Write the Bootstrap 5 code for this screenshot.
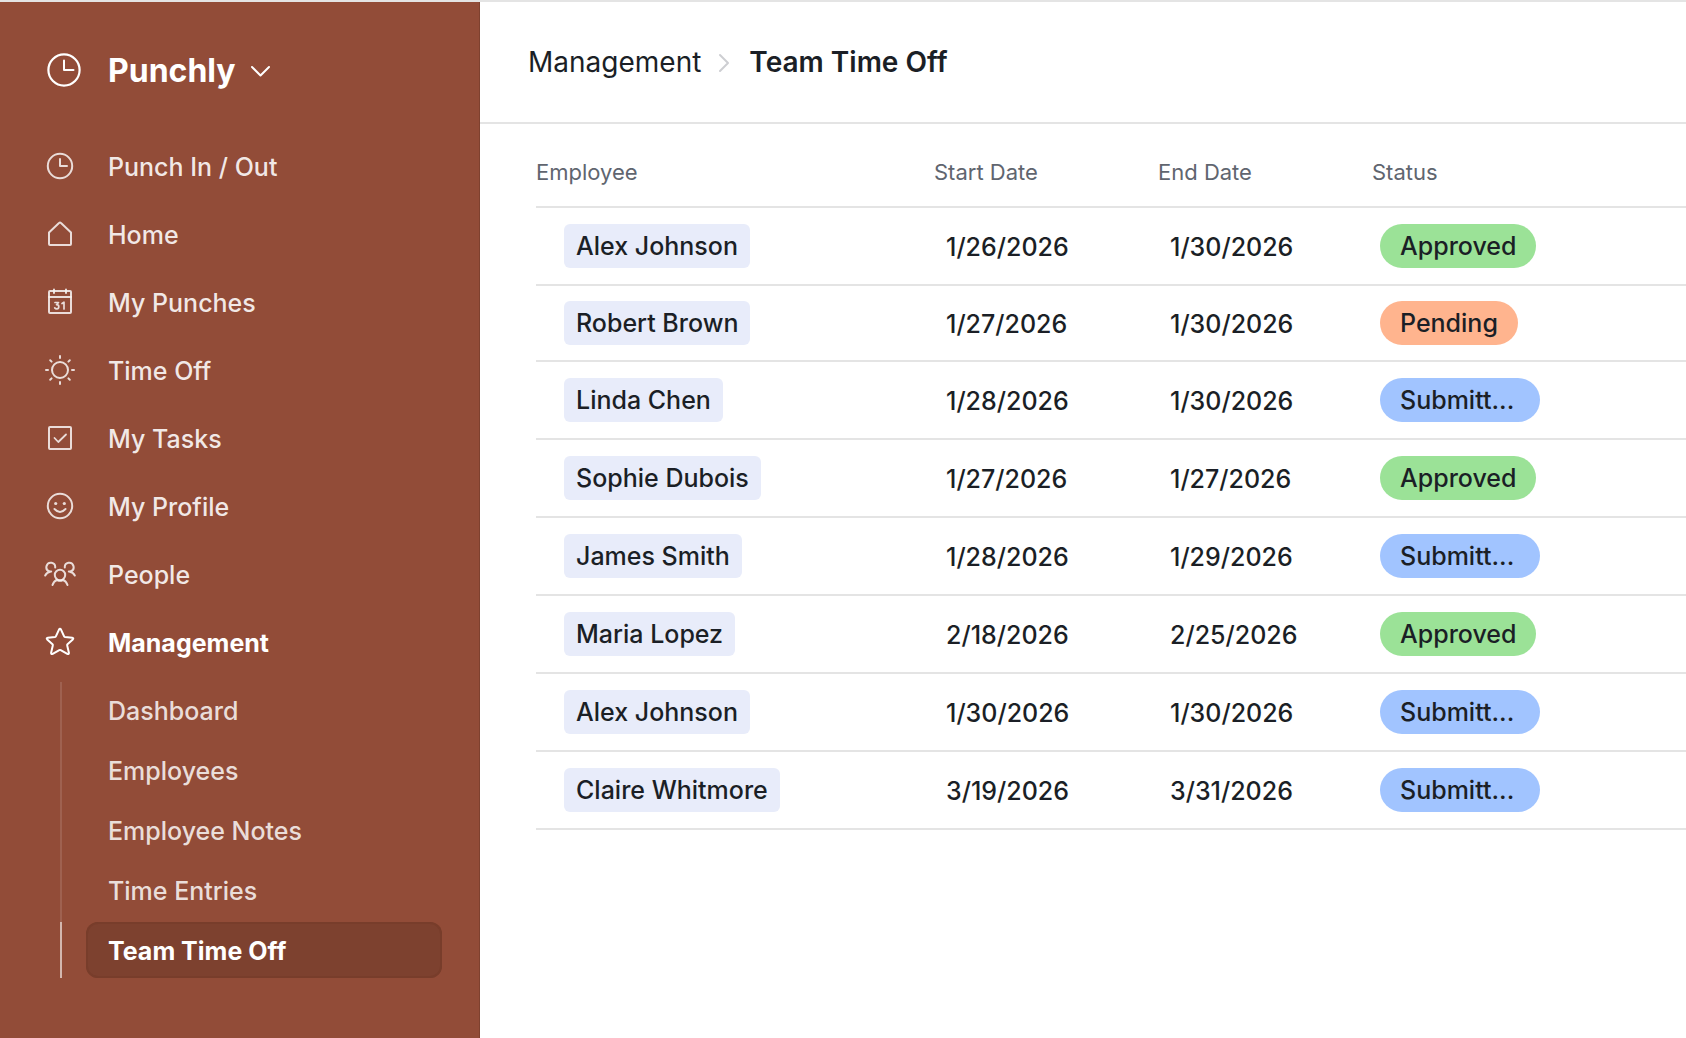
<!DOCTYPE html>
<html lang="en">
<head>
<meta charset="utf-8">
<meta name="viewport" content="width=device-width, initial-scale=1">
<title>Punchly – Team Time Off</title>
<link href="https://cdn.jsdelivr.net/npm/bootstrap@5.3.0/dist/css/bootstrap.min.css" rel="stylesheet">
<style>
  body { font-family: Inter, "Liberation Sans", sans-serif; font-size: 25px; font-weight: 450; line-height: 32px; color: #1b1f26; background: #fff; }
  .app-shell { border-top: 2px solid #e4e4e4; }
  .app-sidebar { width: 480px; background: #924c38; border-right: 1px solid #7e412f; padding: 36px 37px 0 40px; }
  .brand-btn { height: 64px; color: #fff; font-size: 32px; line-height: 40px; padding: 2px 0 0 4px; margin-bottom: 32px; }
  .brand-btn svg:first-child { margin: 0 24px 2px 0; }
  .brand-btn svg:last-child { margin-left: 12px; }
  .side-link { height: 64px; color: rgba(255,255,255,.88); gap: 28px; margin-bottom: 4px; padding-top: 2px; }
  .side-link:hover, .sub-link:hover { color: #fff; }
  .side-link.current { color: #fff; font-weight: 700; }
  svg { fill: none; stroke: currentColor; stroke-linecap: round; stroke-linejoin: round; flex: none; display: block; }
  .side-link svg { opacity: .92; margin-bottom: 2px; }
  .side-link.current svg { opacity: 1; }
  .sub-list { margin: 8px 0 0 20px; }
  .sub-list li { border-left: 2px solid rgba(255,255,255,.12); padding: 0 0 4px 24px; }
  .sub-list li.on { border-color: rgba(255,255,255,.6); padding-bottom: 0; }
  .sub-link { height: 56px; padding: 2px 22px 0; border-radius: 12px; color: rgba(255,255,255,.83); }
  .sub-link.active { background: #7d412f; color: #fff; font-weight: 650; box-shadow: inset 0 0 0 2px #783d2b; }
  .page-head { height: 122px; border-bottom: 2px solid #e4e4e4; padding: 0 48px; font-size: 28px; font-weight: 400; }
  .crumbs { gap: 16px; }
  .crumbs a { color: #1b1f26; }
  .crumbs svg { color: #cdced2; margin-top: 2px; }
  .grid-table { table-layout: fixed; border-collapse: separate; border-spacing: 0; margin: 0; color: inherit; }
  .grid-table th, .grid-table td { border-bottom: 2px solid #e4e4e4; padding: 0; height: 78px; white-space: nowrap; vertical-align: middle; }
  .grid-table th { height: 84px; padding-top: 14px; font-size: 22px; font-weight: 400; color: #60656f; }
  .grid-table tbody tr:nth-child(2) td { height: 76px; }
  .grid-table td:nth-child(1) { padding-left: 28px; }
  .grid-table td:nth-child(2), .grid-table td:nth-child(3) { padding: 2px 0 0 12px; }
  .grid-table td:nth-child(4) { padding-left: 8px; }
  .w-emp { width: 398px; } .w-start { width: 224px; } .w-end { width: 214px; }
  .name-chip, .state-pill { height: 44px; }
  .name-chip { background: #e8ecfa; border-radius: 6px; padding: 0 12px; }
  .state-pill { border-radius: 22px; padding: 0 20px; }
  .is-approved { background: #9be297; } .is-pending { background: #ffb48e; } .is-submitted { background: #a1c4ff; min-width: 160px; }
</style>
</head>
<body>
<div class="app-shell d-flex min-vh-100">
  <nav class="app-sidebar flex-shrink-0" aria-label="Main">
    <button type="button" class="brand-btn btn border-0 d-flex align-items-center fw-bold">
      <svg width="40" height="36" viewBox="0 0 40 36" stroke-width="2.2"><circle cx="20" cy="18" r="15.6"/><path d="M20 8.500V18h9.500" stroke-width="2"/></svg>
      Punchly
      <svg width="24" height="24" viewBox="0 0 24 24" stroke-width="2"><path d="M4 8l8.500 8.500L21 8"/></svg>
    </button>
    <ul class="list-unstyled mb-0">
      <li><a href="#" class="side-link d-flex align-items-center text-decoration-none">
        <svg width="40" height="40" viewBox="0 0 40 40" stroke-width="2"><circle cx="20" cy="20" r="12.200"/><path d="M20 13v7h7"/></svg>Punch In / Out</a></li>
      <li><a href="#" class="side-link d-flex align-items-center text-decoration-none">
        <svg width="40" height="40" viewBox="0 0 40 40" stroke-width="2"><path d="M9 18.500L19 9Q20 8 21 9L31 18.500V30Q31 31 30 31H10Q9 31 9 30Z"/></svg>Home</a></li>
      <li><a href="#" class="side-link d-flex align-items-center text-decoration-none">
        <svg width="40" height="40" viewBox="0 0 40 40" stroke-width="2"><rect x="9" y="9" width="22" height="22" rx="1"/><path d="M9 15h22M14 7.500V11M26 7.500V11"/><path d="M15 20.500h3.500l-2 2.200q2.300 0 2.300 2t-2 2.100q-1.300 0-2.100-.900M22 21.500l2-1.300V27" stroke-width="1.700"/></svg>My Punches</a></li>
      <li><a href="#" class="side-link d-flex align-items-center text-decoration-none">
        <svg width="40" height="40" viewBox="0 0 40 40" stroke-width="2"><circle cx="20" cy="20" r="8"/><path d="M20 6v2M20 32v2M6 20h2M32 20h2M10.200 10.200l1.400 1.400M28.400 28.400l1.400 1.400M29.800 10.200l-1.400 1.400M11.600 28.400l-1.400 1.400"/></svg>Time Off</a></li>
      <li><a href="#" class="side-link d-flex align-items-center text-decoration-none">
        <svg width="40" height="40" viewBox="0 0 40 40" stroke-width="2"><rect x="9" y="9" width="22" height="22" rx="1"/><path d="M14.500 20l3.800 4 7.700-7.500" stroke-width="1.800"/></svg>My Tasks</a></li>
      <li><a href="#" class="side-link d-flex align-items-center text-decoration-none">
        <svg width="40" height="40" viewBox="0 0 40 40" stroke-width="2"><circle cx="20" cy="20" r="12.200"/><path d="M14.500 23q5.500 6 11 0"/><g fill="currentColor" stroke="none"><circle cx="15.700" cy="17.500" r="1.600"/><circle cx="24.300" cy="17.500" r="1.600"/></g></svg>My Profile</a></li>
      <li><a href="#" class="side-link d-flex align-items-center text-decoration-none">
        <svg width="40" height="40" viewBox="0 0 40 40" stroke-width="2"><circle cx="20" cy="21" r="5.200"/><path d="M12.500 31q1.300-3.800 4.500-5Q20 27.500 23 26q3.200 1.200 4.500 5M15.200 13.500a4.400 4.400 0 1 0-6.100 3.700l1.200.500Q7 18 5.200 21.500M9.500 17.500h1.700M24.800 13.500a4.400 4.400 0 1 1 6.100 3.700l-1.200.500Q33 18 34.800 21.500M30.500 17.500h-1.700"/></svg>People</a></li>
      <li><a href="#" class="side-link current d-flex align-items-center text-decoration-none">
        <svg width="40" height="40" viewBox="0 0 40 40" stroke-width="2"><path d="M19 7.600Q20 5.800 21 7.600L24 14.200Q24.300 14.900 25 15L32.200 15.700Q34 16 32.800 17.400L27.500 22.200Q27 22.700 27.200 23.400L28.900 30.700Q29.100 32.600 27.300 31.900L20.700 28.200Q20 27.800 19.300 28.200L12.700 31.900Q10.900 32.600 11.100 30.700L12.800 23.400Q13 22.700 12.500 22.200L7.200 17.400Q6 16 7.800 15.700L15 15Q15.700 14.900 16 14.200Z"/></svg>Management</a>
        <ul class="sub-list list-unstyled">
          <li><a href="#" class="sub-link d-flex align-items-center text-decoration-none">Dashboard</a></li>
          <li><a href="#" class="sub-link d-flex align-items-center text-decoration-none">Employees</a></li>
          <li><a href="#" class="sub-link d-flex align-items-center text-decoration-none">Employee Notes</a></li>
          <li><a href="#" class="sub-link d-flex align-items-center text-decoration-none">Time Entries</a></li>
          <li class="on"><a href="#" class="sub-link active d-flex align-items-center text-decoration-none" aria-current="page">Team Time Off</a></li>
        </ul></li>
    </ul>
  </nav>
  <main class="flex-grow-1">
    <header class="page-head d-flex align-items-center">
      <nav class="crumbs d-flex align-items-center" aria-label="Breadcrumb">
        <a href="#" class="text-decoration-none">Management</a>
        <svg width="16" height="24" viewBox="0 0 16 24" stroke-width="2"><path d="M3 4l8 8-8 8"/></svg>
        <span class="fw-semibold" aria-current="page">Team Time Off</span>
      </nav>
    </header>
    <div class="grid-wrap ps-5 ms-2">
      <table class="grid-table w-100">
        <colgroup><col class="w-emp"><col class="w-start"><col class="w-end"><col></colgroup>
        <thead><tr><th scope="col">Employee</th><th scope="col">Start Date</th><th scope="col">End Date</th><th scope="col">Status</th></tr></thead>
        <tbody>
          <tr><td><span class="name-chip d-inline-flex align-items-center align-middle">Alex Johnson</span></td><td>1/26/2026</td><td>1/30/2026</td><td><span class="state-pill is-approved d-inline-flex align-items-center align-middle">Approved</span></td></tr>
          <tr><td><span class="name-chip d-inline-flex align-items-center align-middle">Robert Brown</span></td><td>1/27/2026</td><td>1/30/2026</td><td><span class="state-pill is-pending d-inline-flex align-items-center align-middle">Pending</span></td></tr>
          <tr><td><span class="name-chip d-inline-flex align-items-center align-middle">Linda Chen</span></td><td>1/28/2026</td><td>1/30/2026</td><td><span class="state-pill is-submitted d-inline-flex align-items-center align-middle">Submitt...</span></td></tr>
          <tr><td><span class="name-chip d-inline-flex align-items-center align-middle">Sophie Dubois</span></td><td>1/27/2026</td><td>1/27/2026</td><td><span class="state-pill is-approved d-inline-flex align-items-center align-middle">Approved</span></td></tr>
          <tr><td><span class="name-chip d-inline-flex align-items-center align-middle">James Smith</span></td><td>1/28/2026</td><td>1/29/2026</td><td><span class="state-pill is-submitted d-inline-flex align-items-center align-middle">Submitt...</span></td></tr>
          <tr><td><span class="name-chip d-inline-flex align-items-center align-middle">Maria Lopez</span></td><td>2/18/2026</td><td>2/25/2026</td><td><span class="state-pill is-approved d-inline-flex align-items-center align-middle">Approved</span></td></tr>
          <tr><td><span class="name-chip d-inline-flex align-items-center align-middle">Alex Johnson</span></td><td>1/30/2026</td><td>1/30/2026</td><td><span class="state-pill is-submitted d-inline-flex align-items-center align-middle">Submitt...</span></td></tr>
          <tr><td><span class="name-chip d-inline-flex align-items-center align-middle">Claire Whitmore</span></td><td>3/19/2026</td><td>3/31/2026</td><td><span class="state-pill is-submitted d-inline-flex align-items-center align-middle">Submitt...</span></td></tr>
        </tbody>
      </table>
    </div>
  </main>
</div>
<script src="https://cdn.jsdelivr.net/npm/bootstrap@5.3.0/dist/js/bootstrap.bundle.min.js"></script>
</body>
</html>
